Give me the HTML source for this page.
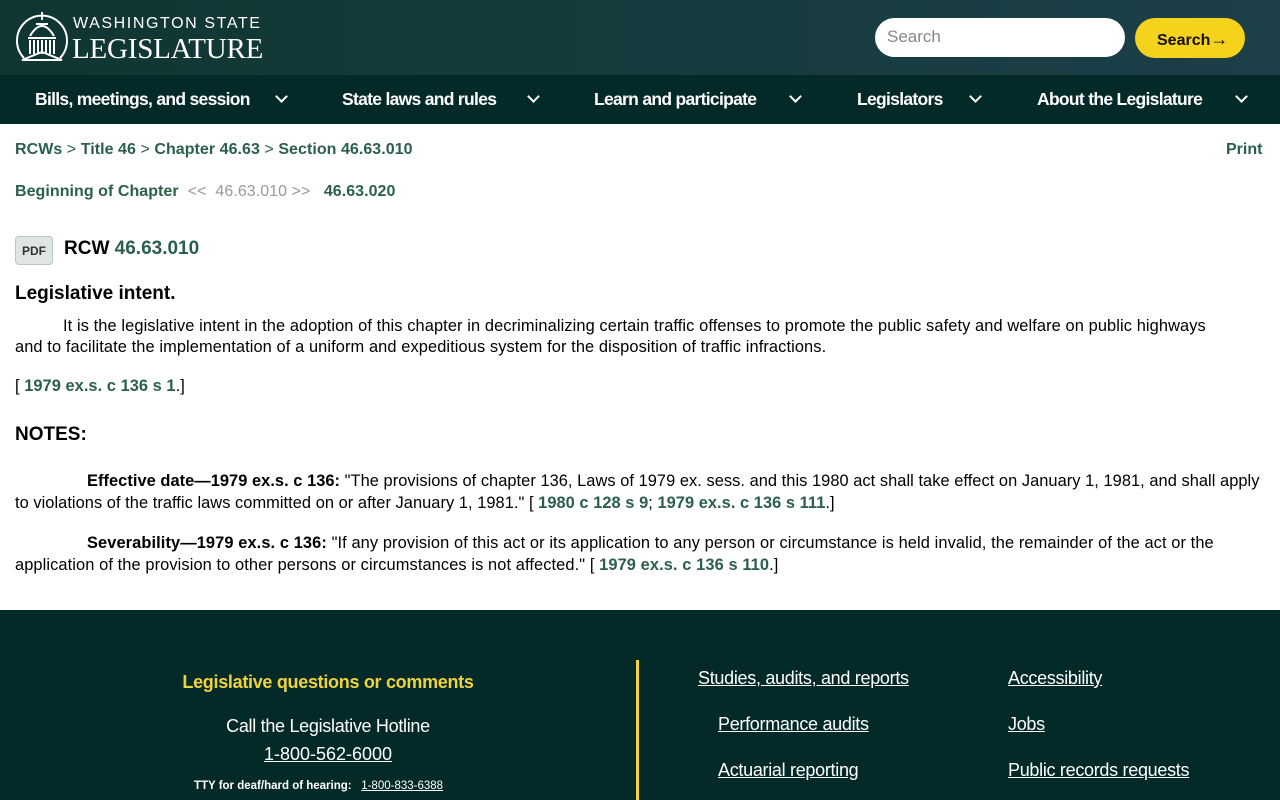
<!DOCTYPE html>
<html><head><meta charset="utf-8"><style>
*{margin:0;padding:0;box-sizing:border-box}
body{width:1280px;height:800px;overflow:hidden;font-family:"Liberation Sans",sans-serif;background:#fff;color:#000}
.hdr{height:75px;background:linear-gradient(90deg,#0f3632,#173c40 60%,#1c3f48);position:relative}
.nav{height:49px;background:#032a28;display:flex;align-items:center;color:#fff;font-weight:bold;font-size:17.5px;letter-spacing:-0.7px}
.nav span{position:absolute}
.chev{display:inline-block;width:9px;height:9px;border-right:2.5px solid #fff;border-bottom:2.5px solid #fff;transform:rotate(45deg);position:absolute}
a{color:#2a6049;font-weight:bold;text-decoration:none}
.c{position:absolute;font-size:16px}
.t{font-size:16.4px;letter-spacing:0.05px}
.foot{position:absolute;top:610px;left:0;width:1280px;height:190px;background:#032a28;color:#fff}
.foot .u{color:#fff;text-decoration:underline;font-size:18px;position:absolute;letter-spacing:-0.3px}
</style></head><body>
<div class="hdr">
<svg style="position:absolute;left:14px;top:8px" width="56" height="58" viewBox="0 0 56 58" fill="none" stroke="#fff" stroke-width="2">
<path d="M10 50 A25 25 0 1 1 46 50"/>
<path d="M28 4 v8 M22 16 h12 M16 28 Q28 8 40 28 M14 30 h28 M16 32 v14 M20 32 v14 M24 32 v14 M28 32 v14 M32 32 v14 M36 32 v14 M40 32 v14 M8 52 L28 44 L48 52 Z"/>
</svg>
<div style="position:absolute;left:73px;top:15px;color:#fff;font-size:16px;letter-spacing:1.6px">WASHINGTON STATE</div>
<div style="position:absolute;left:72px;top:33px;color:#fff;font-family:'Liberation Serif',serif;font-size:29px;letter-spacing:-0.2px">LEGISLATURE</div>
<div style="position:absolute;left:875px;top:18px;width:250px;height:39px;background:#fff;border-radius:20px;color:#888;font-size:17px;padding:9px 12px">Search</div>
<div style="position:absolute;left:1135px;top:18px;width:110px;height:40px;background:#f5d21c;border-radius:20px;font-weight:bold;font-size:16px;padding:11px 0 0 22px;color:#111">Search<span style="font-size:18px">&#x2192;</span></div>
</div>
<div class="nav" style="position:relative">
<span style="left:35px">Bills, meetings, and session</span><i class="chev" style="left:277px;top:17px"></i>
<span style="left:342px">State laws and rules</span><i class="chev" style="left:529px;top:17px"></i>
<span style="left:594px">Learn and participate</span><i class="chev" style="left:791px;top:17px"></i>
<span style="left:857px">Legislators</span><i class="chev" style="left:971px;top:17px"></i>
<span style="left:1037px">About the Legislature</span><i class="chev" style="left:1237px;top:17px"></i>
</div>
<div class="c" style="left:15px;top:141px;color:#2a6049;letter-spacing:0.05px"><a>RCWs</a> &gt; <a>Title 46</a> &gt; <a>Chapter 46.63</a> &gt; <a>Section 46.63.010</a></div>
<div class="c" style="left:1226px;top:141px"><a>Print</a></div>
<div class="c" style="left:15px;top:183px;color:#999;letter-spacing:0.05px"><a>Beginning of Chapter</a> &nbsp;&lt;&lt; &nbsp;46.63.010 &gt;&gt; &nbsp;&nbsp;<a>46.63.020</a></div>
<div style="position:absolute;left:15px;top:236px;width:38px;height:29px;background:#dfe6e1;border:1px solid #b9c6bd;border-radius:4px;font-size:12px;font-weight:bold;color:#333;text-align:center;padding-top:7px">PDF</div>
<div class="c" style="left:64px;top:238px;font-size:19px;font-weight:bold">RCW <a>46.63.010</a></div>
<div class="c" style="left:15px;top:283px;font-size:19px;font-weight:bold">Legislative intent.</div>
<div class="c t" style="left:15px;top:316px;width:1250px;line-height:21px;text-indent:48px;letter-spacing:0.1px">It is the legislative intent in the adoption of this chapter in decriminalizing certain traffic offenses to promote the public safety and welfare on public highways<br>and to facilitate the implementation of a uniform and expeditious system for the disposition of traffic infractions.</div>
<div class="c t" style="left:15px;top:377px">[ <a>1979 ex.s. c 136 s 1</a>.]</div>
<div class="c" style="left:15px;top:424px;font-size:19px;font-weight:bold">NOTES:</div>
<div class="c t" style="left:15px;top:470px;width:1258px;line-height:22px;text-indent:72px"><b>Effective date—1979 ex.s. c 136:</b> "The provisions of chapter 136, Laws of 1979 ex. sess. and this 1980 act shall take effect on January 1, 1981, and shall apply to violations of the traffic laws committed on or after January 1, 1981." [ <a>1980 c 128 s 9</a>; <a>1979 ex.s. c 136 s 111</a>.]</div>
<div class="c t" style="left:15px;top:532px;width:1250px;line-height:22px;text-indent:72px;letter-spacing:0.1px"><b>Severability—1979 ex.s. c 136:</b> "If any provision of this act or its application to any person or circumstance is held invalid, the remainder of the act or the application of the provision to other persons or circumstances is not affected." [ <a>1979 ex.s. c 136 s 110</a>.]</div>
<div class="foot">
<div style="position:absolute;left:0;width:656px;text-align:center;top:62px;color:#f0d23a;font-weight:bold;font-size:18px;letter-spacing:-0.3px">Legislative questions or comments</div>
<div style="position:absolute;left:0;width:656px;text-align:center;top:106px;font-size:18px;letter-spacing:-0.3px">Call the Legislative Hotline</div>
<div style="position:absolute;left:0;width:656px;text-align:center;top:134px;font-size:18px;text-decoration:underline">1-800-562-6000</div>
<div style="position:absolute;left:194px;top:170px;font-size:11.5px;font-weight:bold">TTY for deaf/hard of hearing: &nbsp;&nbsp;<span style="text-decoration:underline;font-weight:normal">1-800-833-6388</span></div>
<div style="position:absolute;left:636px;top:50px;width:3px;height:140px;background:#f0d23a"></div>
<span class="u" style="left:698px;top:58px">Studies, audits, and reports</span>
<span class="u" style="left:718px;top:104px">Performance audits</span>
<span class="u" style="left:718px;top:150px">Actuarial reporting</span>
<span class="u" style="left:1008px;top:58px">Accessibility</span>
<span class="u" style="left:1008px;top:104px">Jobs</span>
<span class="u" style="left:1008px;top:150px">Public records requests</span>
</div>
</body></html>
